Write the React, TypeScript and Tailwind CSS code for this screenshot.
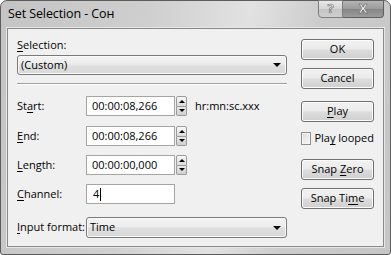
import React from 'react'

const font = "font-['Open_Sans','Noto_Sans','Liberation_Sans',sans-serif]"

const btnClass =
  'flex items-center justify-center w-[73px] h-[21px] rounded-[3px] border border-[#707070] bg-[linear-gradient(#f2f2f2_0%,#ebebeb_45%,#dcdcdc_55%,#cfcfcf_100%)] shadow-[inset_0_0_0_1px_#fbfbfb] text-[11px] text-black'

function U({ children }: { children: string }) {
  return <span className="underline underline-offset-[2px] decoration-[1px]">{children}</span>
}

function Spinner() {
  return (
    <div className="ml-[1px] flex flex-col w-[11px] h-[20px]">
      <div className="flex-1 flex items-center justify-center border border-[#9a9a9a] rounded-t-[2px] bg-[linear-gradient(#f8f8f8,#dadada)]">
        <div className="w-0 h-0 border-l-[3px] border-r-[3px] border-b-[3px] border-l-transparent border-r-transparent border-b-black" />
      </div>
      <div className="flex-1 flex items-center justify-center border border-t-0 border-[#9a9a9a] rounded-b-[2px] bg-[linear-gradient(#e8e8e8,#cfcfcf)]">
        <div className="w-0 h-0 border-l-[3px] border-r-[3px] border-t-[3px] border-l-transparent border-r-transparent border-t-black" />
      </div>
    </div>
  )
}

function Combo({ value, className }: { value: string; className: string }) {
  return (
    <div
      className={`flex items-center justify-between rounded-[3px] border border-[#7a7a7a] bg-[linear-gradient(#f4f4f4_0%,#ececec_45%,#dfdfdf_55%,#d8d8d8_100%)] shadow-[inset_0_0_0_1px_#fafafa] pl-[3px] pr-[5px] text-[11px] text-black ${className}`}
    >
      <span>{value}</span>
      <div className="w-0 h-0 border-l-[4px] border-r-[4px] border-t-[4px] border-l-transparent border-r-transparent border-t-black" />
    </div>
  )
}

function TimeRow({ label, mn, rest, value, mt, extra }: { label: string; mn: string; rest: string; value: string; mt: string; extra?: boolean }) {
  const before = label.slice(0, label.indexOf(mn))
  return (
    <div className={`flex items-center h-[20px] ${mt}`}>
      <span className="w-[69px] text-[11px] text-black">
        {before}
        <U>{mn}</U>
        {rest}
      </span>
      <div className="w-[89px] h-[20px] flex items-center border border-[#a5a5a5] bg-white pl-[5px] text-[11px] text-black">
        {value}
      </div>
      <Spinner />
      {extra && <span className="ml-[8px] text-[11px] text-black">hr:mn:sc.xxx</span>}
    </div>
  )
}

export default function App() {
  return (
    <div className={`w-[391px] h-[255px] flex flex-col rounded-t-[7px] rounded-b-[3px] border border-[#5c5c5c] bg-[linear-gradient(100deg,#c4c4c4_0%,#cfcfcf_35%,#e2e2e2_58%,#cbcbcb_75%,#c6c6c6_100%)] ${font}`}>
      {/* Title bar */}
      <div className="h-[27px] flex items-start justify-between pl-[7px] pr-[6px]">
        <span className="mt-[4px] text-[12.5px] text-black tracking-[-0.1px]">Set Selection - Сон</span>
        <div className="flex -mt-px">
          <div className="w-[25px] h-[18px] flex items-center justify-center rounded-bl-[4px] border border-[#7d7d7d] bg-[linear-gradient(#e9e9e9,#d4d4d4_50%,#c4c4c4_50%,#cfcfcf)] text-[13px] font-bold text-[#e8e8e8] [-webkit-text-stroke:0.6px_#6a6a6a]">
            ?
          </div>
          <div className="w-[41px] h-[18px] flex items-center justify-center rounded-br-[4px] border border-l-0 border-[#5e5e5e] bg-[linear-gradient(#b4b4b4,#9a9a9a_50%,#858585_50%,#9c9c9c)] text-[13px] font-bold text-white [-webkit-text-stroke:0.5px_#555]">
            X
          </div>
        </div>
      </div>

      {/* Client area */}
      <div className="mx-[6px] mb-[7px] flex-1 flex border border-[#8a8a8a] bg-[#f0f0f0] shadow-[0_0_0_1px_#e6e6e6]">
        {/* Left column */}
        <div className="ml-[9px] w-[270px] flex flex-col pt-[8px]">
          <span className="h-[15px] leading-[15px] text-[11px] text-black">
            <U>S</U>election:
          </span>
          <Combo value="(Custom)" className="mt-[3px] h-[20px] w-[270px]" />
          <div className="mt-[8px] h-[2px] border-t border-[#a0a0a0] border-b border-b-white" />

          <TimeRow label="Start:" mn="a" rest="rt:" value="00:00:08,266" mt="mt-[11px]" extra />
          <TimeRow label="End:" mn="E" rest="nd:" value="00:00:08,266" mt="mt-[10px]" />
          <TimeRow label="Length:" mn="L" rest="ength:" value="00:00:00,000" mt="mt-[9px]" />

          <div className="flex items-center h-[20px] mt-[9px]">
            <span className="w-[69px] text-[11px] text-black">
              <U>C</U>hannel:
            </span>
            <div className="w-[89px] h-[20px] flex items-center border border-[#a5a5a5] bg-white pl-[6px] text-[11px] text-black">
              4<span className="ml-[1px] w-px h-[13px] bg-black" />
            </div>
          </div>

          <div className="flex items-center h-[21px] mt-[13px]">
            <span className="w-[69px] text-[11px] text-black">
              <U>I</U>nput format:
            </span>
            <Combo value="Time" className="h-[21px] w-[201px]" />
          </div>
        </div>

        {/* Right column */}
        <div className="ml-[14px] w-[73px] flex flex-col pt-[10px]">
          <button className={btnClass}>OK</button>
          <button className={`${btnClass} mt-[8px]`}>Cancel</button>
          <button className={`${btnClass} mt-[12px]`}>
            <span>
              <U>P</U>lay
            </span>
          </button>
          <div className="mt-[10px] h-[13px] flex items-center">
            <div className="w-[13px] h-[13px] border border-[#8e8e8e] bg-[linear-gradient(135deg,#dcdcdc,#f8f8f8)] shadow-[inset_0_0_0_1px_#f4f4f4]" />
            <span className="ml-[3px] text-[11px] text-black whitespace-nowrap">
              Pla<U>y</U> looped
            </span>
          </div>
          <button className={`${btnClass} mt-[14px]`}>
            <span>
              Snap <U>Z</U>ero
            </span>
          </button>
          <button className={`${btnClass} mt-[8px]`}>
            <span>
              Snap Ti<U>m</U>e
            </span>
          </button>
        </div>
      </div>
    </div>
  )
}
